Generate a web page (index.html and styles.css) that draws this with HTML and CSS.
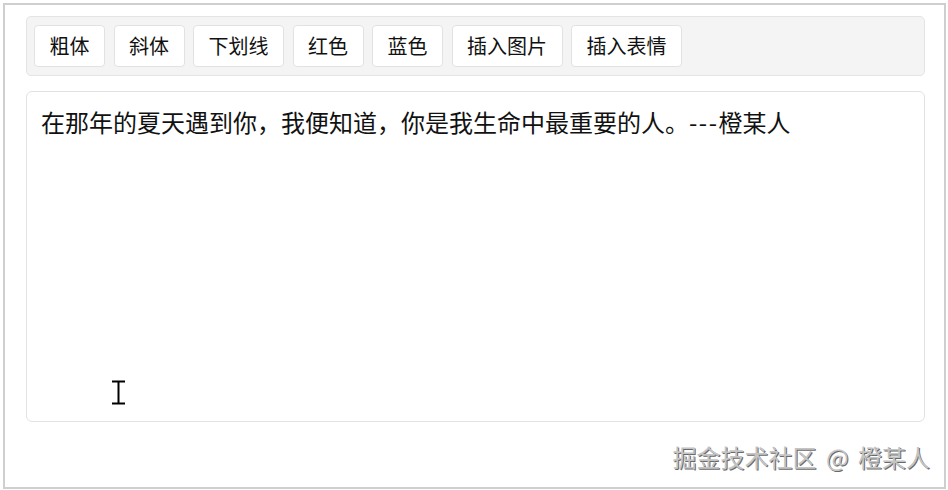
FILE: index.html
```html
<!DOCTYPE html>
<html lang="zh-CN">

<head>
    <meta charset="UTF-8">
    <meta name="viewport" content="width=device-width, initial-scale=1.0">
    <title>富文本编辑器</title>
    <link rel="stylesheet" href="styles.css">
</head>

<body>
    <div class="frame">
        <div class="toolbar">
            <button type="button" class="tool">粗体</button>
            <button type="button" class="tool">斜体</button>
            <button type="button" class="tool">下划线</button>
            <button type="button" class="tool">红色</button>
            <button type="button" class="tool">蓝色</button>
            <button type="button" class="tool">插入图片</button>
            <button type="button" class="tool">插入表情</button>
        </div>

        <div class="editor" contenteditable="true">
            <p>在那年的夏天遇到你，我便知道，你是我生命中最重要的人。<span class="dash">---</span>橙某人</p>
            <!-- mouse pointer hovering over the editor -->
            <svg class="cursor" width="15" height="25" viewBox="0 0 15 25">
                <path d="M1 1.5h13M1 23.5h13M7.5 1.5v22" stroke="#000" stroke-width="2" fill="none" />
            </svg>
        </div>

        <div class="watermark">掘金技术社区 @ 橙某人</div>
    </div>
</body>

</html>
```

FILE: styles.css
```css
* {
    box-sizing: border-box;
}

body {
    margin: 0;
    font-family: "Noto Sans CJK SC", "Noto Sans", sans-serif;
    background: #fff;
    color: #111;
}

.frame {
    margin: 3px 2px 1px 3px;
    height: 486px;
    border: 2px solid #cfcfcf;
    padding: 11px 0 0 21px;
}

.toolbar {
    width: 899px;
    display: flex;
    gap: 8.5px;
    padding: 8px 7px;
    background: #f4f4f4;
    border: 1px solid #e4e4e4;
    border-radius: 5px;
}

.tool {
    height: 42px;
    padding: 0 14.5px;
    font-family: inherit;
    font-size: 20px;
    line-height: 1;
    color: #111;
    background: #fff;
    border: 1px solid #e2e2e2;
    border-radius: 4px;
}

.editor {
    position: relative;
    width: 899px;
    height: 331px;
    margin-top: 15px;
    padding: 13px 14px;
    border: 1px solid #e2e2e2;
    border-radius: 6px;
    background: #fff;
    font-size: 24px;
    line-height: 34px;
    outline: none;
}

.editor p {
    margin: 0;
}

.dash {
    letter-spacing: 1.5px;
}

.cursor {
    position: absolute;
    left: 84px;
    top: 288px;
}

.watermark {
    margin-top: 20px;
    padding-right: 14px;
    text-align: right;
    font-size: 24px;
    line-height: 30px;
    word-spacing: 4px;
    color: #c4c4c4;
    text-shadow: 1px 1px 0 #6a6a6a;
}
```
